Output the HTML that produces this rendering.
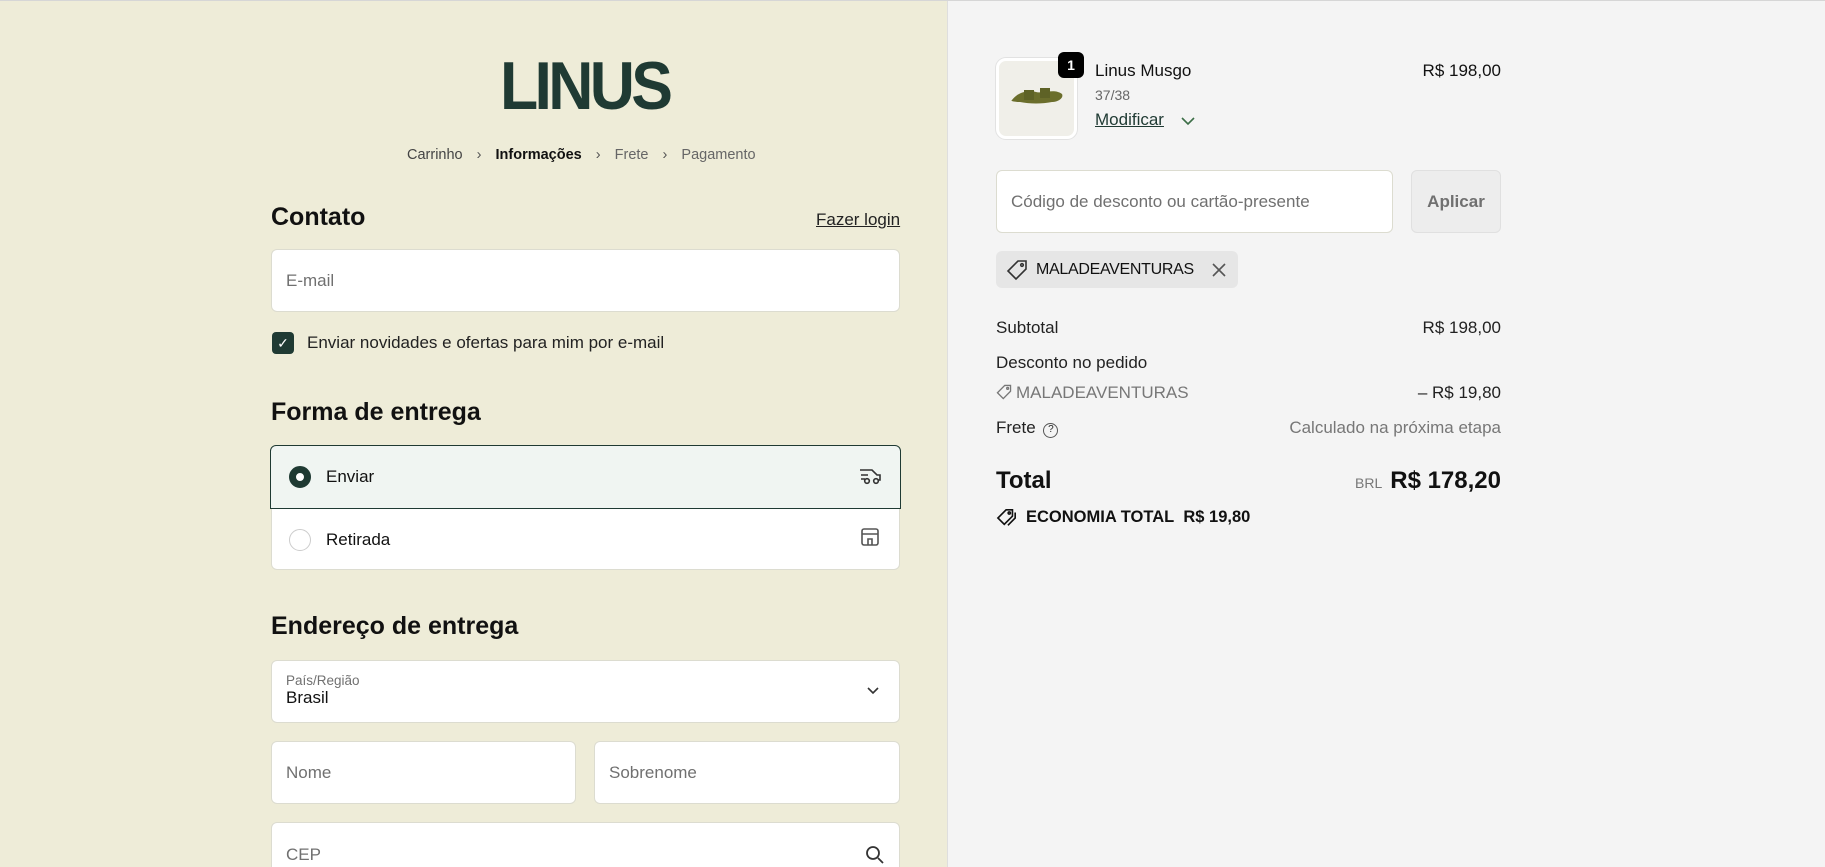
<!DOCTYPE html>
<html><head><meta charset="utf-8"><style>
*{box-sizing:border-box;margin:0;padding:0}
html,body{width:1825px;height:867px;overflow:hidden}
body{font-family:"Liberation Sans",sans-serif;color:#111;position:relative;background:#f4f4f4}
.left{position:absolute;left:0;top:0;width:948px;height:867px;background:#eeecd8;border-right:1px solid #dedede;overflow:hidden}
.topline{position:absolute;left:0;top:0;width:100%;height:1px;background:#d6d6d6}
.a{position:absolute}
.inp{position:absolute;background:#fff;border:1px solid #dcdcd0;border-radius:6px;font-size:17px;color:#707070;padding-left:14px;display:flex;align-items:center}
h2{position:absolute;font-size:25px;font-weight:bold;color:#111}
.row{position:absolute;left:996px;width:505px;display:flex;justify-content:space-between;font-size:17px;color:#222}
</style></head><body>
<div class="left">
 <div class="a" style="left:500px;top:52px;width:172px;text-align:center;font-size:68px;font-weight:bold;color:#1f3a33;letter-spacing:-4px;line-height:68px;transform:scaleX(0.92);transform-origin:left">LINUS</div>
 <div class="a" style="left:407px;top:147px;font-size:14.5px;color:#444;white-space:nowrap">Carrinho <span style="margin:0 10px;color:#555">›</span> <b style="color:#111">Informações</b> <span style="margin:0 10px;color:#555">›</span> <span style="color:#666">Frete</span> <span style="margin:0 10px;color:#555">›</span> <span style="color:#666">Pagamento</span></div>
 <h2 style="left:271px;top:203px">Contato</h2>
 <div class="a" style="left:816px;top:210px;font-size:17px;text-decoration:underline;color:#222">Fazer login</div>
 <div class="inp" style="left:271px;top:249px;width:629px;height:63px">E-mail</div>
 <div class="a" style="left:272px;top:332px;width:22px;height:22px;background:#1f3a33;border-radius:4px;color:#fff;font-size:14px;text-align:center;line-height:22px">✓</div>
 <div class="a" style="left:307px;top:333px;font-size:17px;color:#222">Enviar novidades e ofertas para mim por e-mail</div>
 <h2 style="left:271px;top:398px">Forma de entrega</h2>
 <div class="a" style="left:271px;top:445px;width:629px;height:125px;background:#fff;border:1px solid #dcdcd0;border-radius:6px"></div>
 <div class="a" style="left:270px;top:445px;width:631px;height:64px;background:#f0f5f2;border:1px solid #1f3a33;border-radius:6px 6px 0 0"></div>
 <div class="a" style="left:289px;top:466px;width:22px;height:22px;border-radius:50%;border:7px solid #1f3a33;background:#fff"></div>
 <div class="a" style="left:326px;top:467px;font-size:17px">Enviar</div>
 <svg class="a" style="left:858px;top:465px" width="24" height="22" viewBox="0 0 24 22" fill="none" stroke="#333" stroke-width="1.6"><path d="M2 5h12l5 5h3v5h-2M3 10h7M3 14h4"/><circle cx="9" cy="16" r="2.3"/><circle cx="18" cy="16" r="2.3"/></svg>
 <div class="a" style="left:289px;top:529px;width:22px;height:22px;border-radius:50%;border:1px solid #ccc"></div>
 <div class="a" style="left:326px;top:530px;font-size:17px">Retirada</div>
 <svg class="a" style="left:860px;top:527px" width="20" height="20" viewBox="0 0 20 20" fill="none" stroke="#555" stroke-width="1.6"><rect x="2" y="2" width="16" height="16" rx="2"/><path d="M2 7h16M8 18v-6h4v6"/></svg>
 <h2 style="left:271px;top:612px">Endereço de entrega</h2>
 <div class="inp" style="left:271px;top:660px;width:629px;height:63px;display:block;padding-top:12px">
  <div style="font-size:13.5px;color:#707070">País/Região</div><div style="font-size:17px;color:#111">Brasil</div>
  <svg style="position:absolute;right:20px;top:26px" width="12" height="8" viewBox="0 0 12 8" fill="none" stroke="#333" stroke-width="1.6"><path d="M1 1l5 5 5-5"/></svg>
 </div>
 <div class="inp" style="left:271px;top:741px;width:305px;height:63px">Nome</div>
 <div class="inp" style="left:594px;top:741px;width:306px;height:63px">Sobrenome</div>
 <div class="inp" style="left:271px;top:822px;width:629px;height:63px;align-items:flex-start;padding-top:22px">CEP
  <svg style="position:absolute;right:14px;top:22px" width="20" height="20" viewBox="0 0 20 20" fill="none" stroke="#333" stroke-width="1.8"><circle cx="8" cy="8" r="6"/><path d="M13 13l5 5"/></svg>
 </div>
</div>
<div class="topline"></div>
<div class="a" style="left:996px;top:58px;width:81px;height:81px;background:#f0efe9;border:3px solid #fff;border-radius:10px;box-shadow:0 0 0 1px #e2e2e2"></div>
<svg class="a" style="left:1008px;top:82px" width="58" height="30" viewBox="0 0 58 30"><path d="M4 18c6-8 16-10 24-8s18-4 26 2c2 4-4 8-10 8-10 2-22 2-32 0-6 0-10-1-8-2z" fill="#6b6e2c"/><path d="M16 8h10v10h-10zM32 6h10v10h-10z" fill="#5e6226"/></svg>
<div class="a" style="left:1058px;top:52px;width:26px;height:26px;background:#000;color:#fff;border-radius:6px;font-size:14px;font-weight:bold;text-align:center;line-height:26px">1</div>
<div class="a" style="left:1095px;top:61px;font-size:17px">Linus Musgo</div>
<div class="a" style="left:1095px;top:87px;font-size:14px;color:#666">37/38</div>
<div class="a" style="left:1095px;top:110px;font-size:17px;color:#1f3a33;text-decoration:underline">Modificar</div>
<svg class="a" style="left:1181px;top:117px" width="14" height="9" viewBox="0 0 14 9" fill="none" stroke="#3c6e47" stroke-width="1.6"><path d="M1 1l6 6 6-6"/></svg>
<div class="a" style="right:324px;top:61px;font-size:17px">R$ 198,00</div>
<div class="inp" style="left:996px;top:170px;width:397px;height:63px">Código de desconto ou cartão-presente</div>
<div class="a" style="left:1411px;top:170px;width:90px;height:63px;background:#ededed;border:1px solid #e0e0e0;border-radius:6px;font-size:17px;font-weight:bold;color:#707070;text-align:center;line-height:61px">Aplicar</div>
<div class="a" style="left:996px;top:251px;width:242px;height:37px;background:#e6e6e6;border-radius:6px"></div>
<svg class="a" style="left:1006px;top:259px" width="22" height="22" viewBox="0 0 22 22" fill="none" stroke="#333" stroke-width="1.6"><path d="M12 2h8v8l-10 10-8-8z"/><circle cx="16" cy="6" r="1.3"/></svg>
<div class="a" style="left:1036px;top:261px;font-size:16px;letter-spacing:-0.3px">MALADEAVENTURAS</div>
<svg class="a" style="left:1212px;top:263px" width="14" height="14" viewBox="0 0 14 14" stroke="#555" stroke-width="1.6"><path d="M1 1l12 12M13 1L1 13"/></svg>
<div class="row" style="top:318px"><span>Subtotal</span><span>R$ 198,00</span></div>
<div class="row" style="top:353px"><span>Desconto no pedido</span></div>
<div class="row" style="top:383px;color:#777"><span><svg width="16" height="16" viewBox="0 0 22 22" fill="none" stroke="#777" stroke-width="1.8" style="vertical-align:-2px;margin-right:4px"><path d="M12 2h8v8l-10 10-8-8z"/><circle cx="16" cy="6" r="1.3"/></svg>MALADEAVENTURAS</span><span style="color:#222">– R$ 19,80</span></div>
<div class="row" style="top:418px"><span>Frete <span style="display:inline-block;width:15px;height:15px;border:1.5px solid #555;border-radius:50%;font-size:10px;text-align:center;line-height:12px;vertical-align:1px;margin-left:3px">?</span></span><span style="color:#777">Calculado na próxima etapa</span></div>
<div class="row" style="top:467px;align-items:baseline"><span style="font-size:24px;font-weight:bold;color:#111">Total</span><span><span style="font-size:14px;color:#777;margin-right:8px">BRL</span><b style="font-size:24px;color:#111">R$ 178,20</b></span></div>
<div class="row" style="top:508px;justify-content:flex-start;font-weight:bold;color:#111;font-size:16.5px"><svg width="22" height="20" viewBox="0 0 22 22" fill="none" stroke="#111" stroke-width="1.8" style="margin-right:8px"><path d="M10 2h7v7l-9 9-7-7z"/><path d="M20 5v6l-8 8"/><circle cx="13.5" cy="5.5" r="1.2"/></svg>ECONOMIA TOTAL&nbsp; R$ 19,80</div>
</body></html>
